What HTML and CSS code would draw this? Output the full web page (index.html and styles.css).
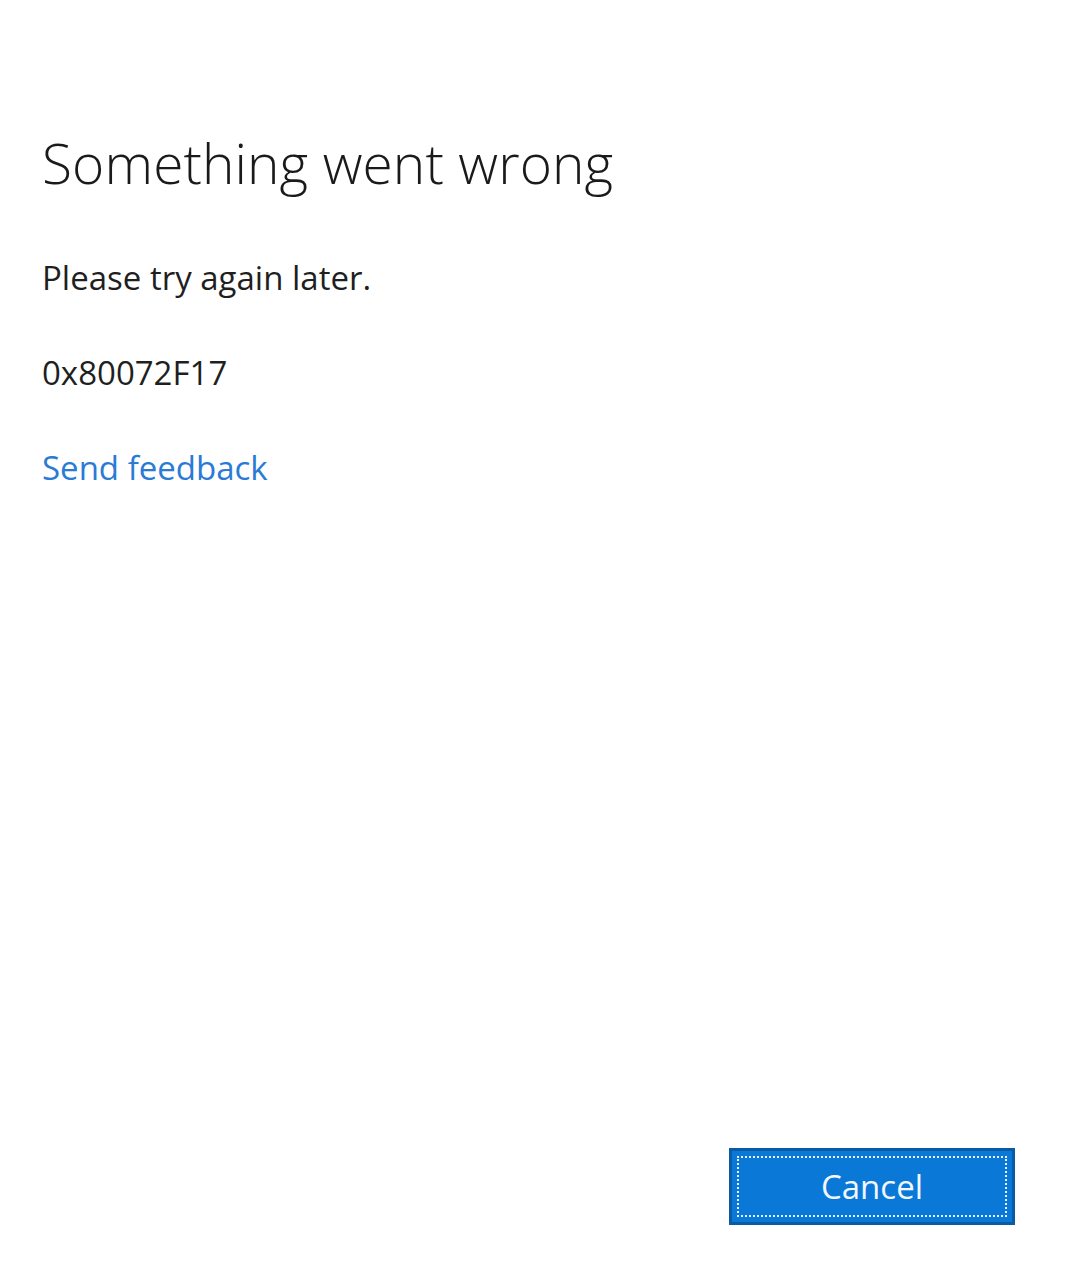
FILE: index.html
```html
<!DOCTYPE html>
<html lang="en">
<head>
<meta charset="utf-8">
<title>Something went wrong</title>
<link rel="stylesheet" href="styles.css">
</head>
<body>
<div class="page">
  <div class="content">
    <h1 class="title">Something went wrong</h1>
    <p class="msg">Please try again later.</p>
    <p class="msg code">0x80072F17</p>
    <a class="link" href="#">Send feedback</a>
  </div>
  <div class="actions">
    <button class="btn" type="button"><span class="focus">Cancel</span></button>
  </div>
</div>
</body>
</html>
```
FILE: styles.css
```css
html, body {
  margin: 0;
  padding: 0;
  background: #ffffff;
}
body {
  font-family: "Open Sans", "Noto Sans", "Liberation Sans", sans-serif;
  color: #1f1f1f;
}
.page {
  display: flex;
  flex-direction: column;
  justify-content: space-between;
  min-height: 1282px;
  box-sizing: border-box;
  padding: 123px 65px 57px 42px;
}
.content {
  display: flex;
  flex-direction: column;
  align-items: flex-start;
}
.title {
  margin: 0;
  font-size: 55px;
  font-weight: 300;
  line-height: 80px;
  color: #1a1a1a;
  letter-spacing: 0.1px;
}
.msg {
  margin: 0;
  font-size: 33px;
  line-height: 40px;
  font-weight: 400;
}
.title + .msg {
  margin-top: 55px;
}
.code {
  margin-top: 55px;
}
.link {
  margin-top: 55px;
  font-size: 33px;
  line-height: 40px;
  color: #2a7bd5;
  text-decoration: none;
}
.actions {
  display: flex;
  justify-content: flex-end;
}
.btn {
  width: 286px;
  height: 77px;
  padding: 5px;
  box-sizing: border-box;
  background: #0a78d6;
  border: 3px solid #0a5aa6;
  font-family: inherit;
  font-size: 33px;
  color: #f2f6ff;
  display: flex;
}
.focus {
  flex: 1;
  display: flex;
  align-items: center;
  justify-content: center;
  border: 2px dotted #e8f0ff;
}
```
